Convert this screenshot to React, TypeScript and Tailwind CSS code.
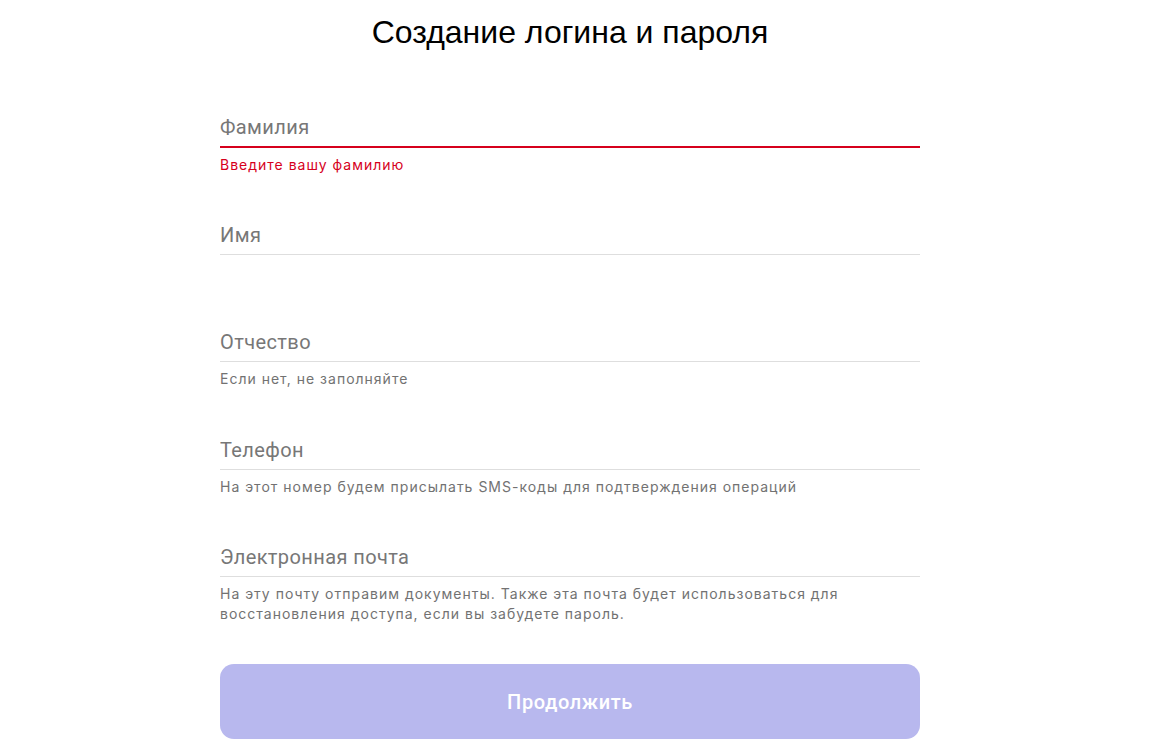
import React from 'react';

type Field = {
  name: string;
  label: string;
  hint?: string;
  error?: boolean;
};

const FIELDS: Field[] = [
  { name: 'lastName', label: 'Фамилия', hint: 'Введите вашу фамилию', error: true },
  { name: 'firstName', label: 'Имя' },
  { name: 'middleName', label: 'Отчество', hint: 'Если нет, не заполняйте' },
  { name: 'phone', label: 'Телефон', hint: 'На этот номер будем присылать SMS-коды для подтверждения операций' },
  {
    name: 'email',
    label: 'Электронная почта',
    hint: 'На эту почту отправим документы. Также эта почта будет использоваться для восстановления доступа, если вы забудете пароль.',
  },
];

const FormField: React.FC<{ field: Field; last: boolean }> = ({ field, last }) => (
  <div className={last ? '' : 'h-[107.5px]'}>
    <div className={field.error ? 'border-b-2 border-[#d6001c] pb-[7px]' : 'border-b border-[#dedede] pb-[7px]'}>
      <input
        name={field.name}
        placeholder={field.label}
        className="block h-6 w-full bg-transparent text-[20px] leading-6 tracking-[0.4px] text-[#333] outline-none placeholder:text-[#777777]"
      />
    </div>
    {field.hint && (
      <p
        className={
          "mt-[7px] font-['Inter',sans-serif] text-[14px] leading-5 tracking-[1px] " +
          (field.error ? 'mt-[6px] text-[#d6001c]' : 'text-[#727272]')
        }
      >
        {field.hint}
      </p>
    )}
  </div>
);

export default function App() {
  return (
    <div className="min-h-screen bg-white font-['Roboto',sans-serif]">
      <div className="ml-[220px] w-[700px] pt-[12px]">
        <h1 className="text-center font-['Liberation_Sans',Arial,sans-serif] text-[32px] leading-10 font-normal text-black">
          Создание логина и пароля
        </h1>

        <form className="mt-[63px]" onSubmit={e => e.preventDefault()}>
          {FIELDS.map((f, i) => (
            <FormField key={f.name} field={f} last={i === FIELDS.length - 1} />
          ))}

          <button
            type="submit"
            className="mt-[40px] flex h-[75px] w-full items-center justify-center rounded-[14px] bg-[#b8b8ee] text-[20px] font-medium tracking-[0.6px] text-white"
          >
            Продолжить
          </button>
        </form>
      </div>
    </div>
  );
}
